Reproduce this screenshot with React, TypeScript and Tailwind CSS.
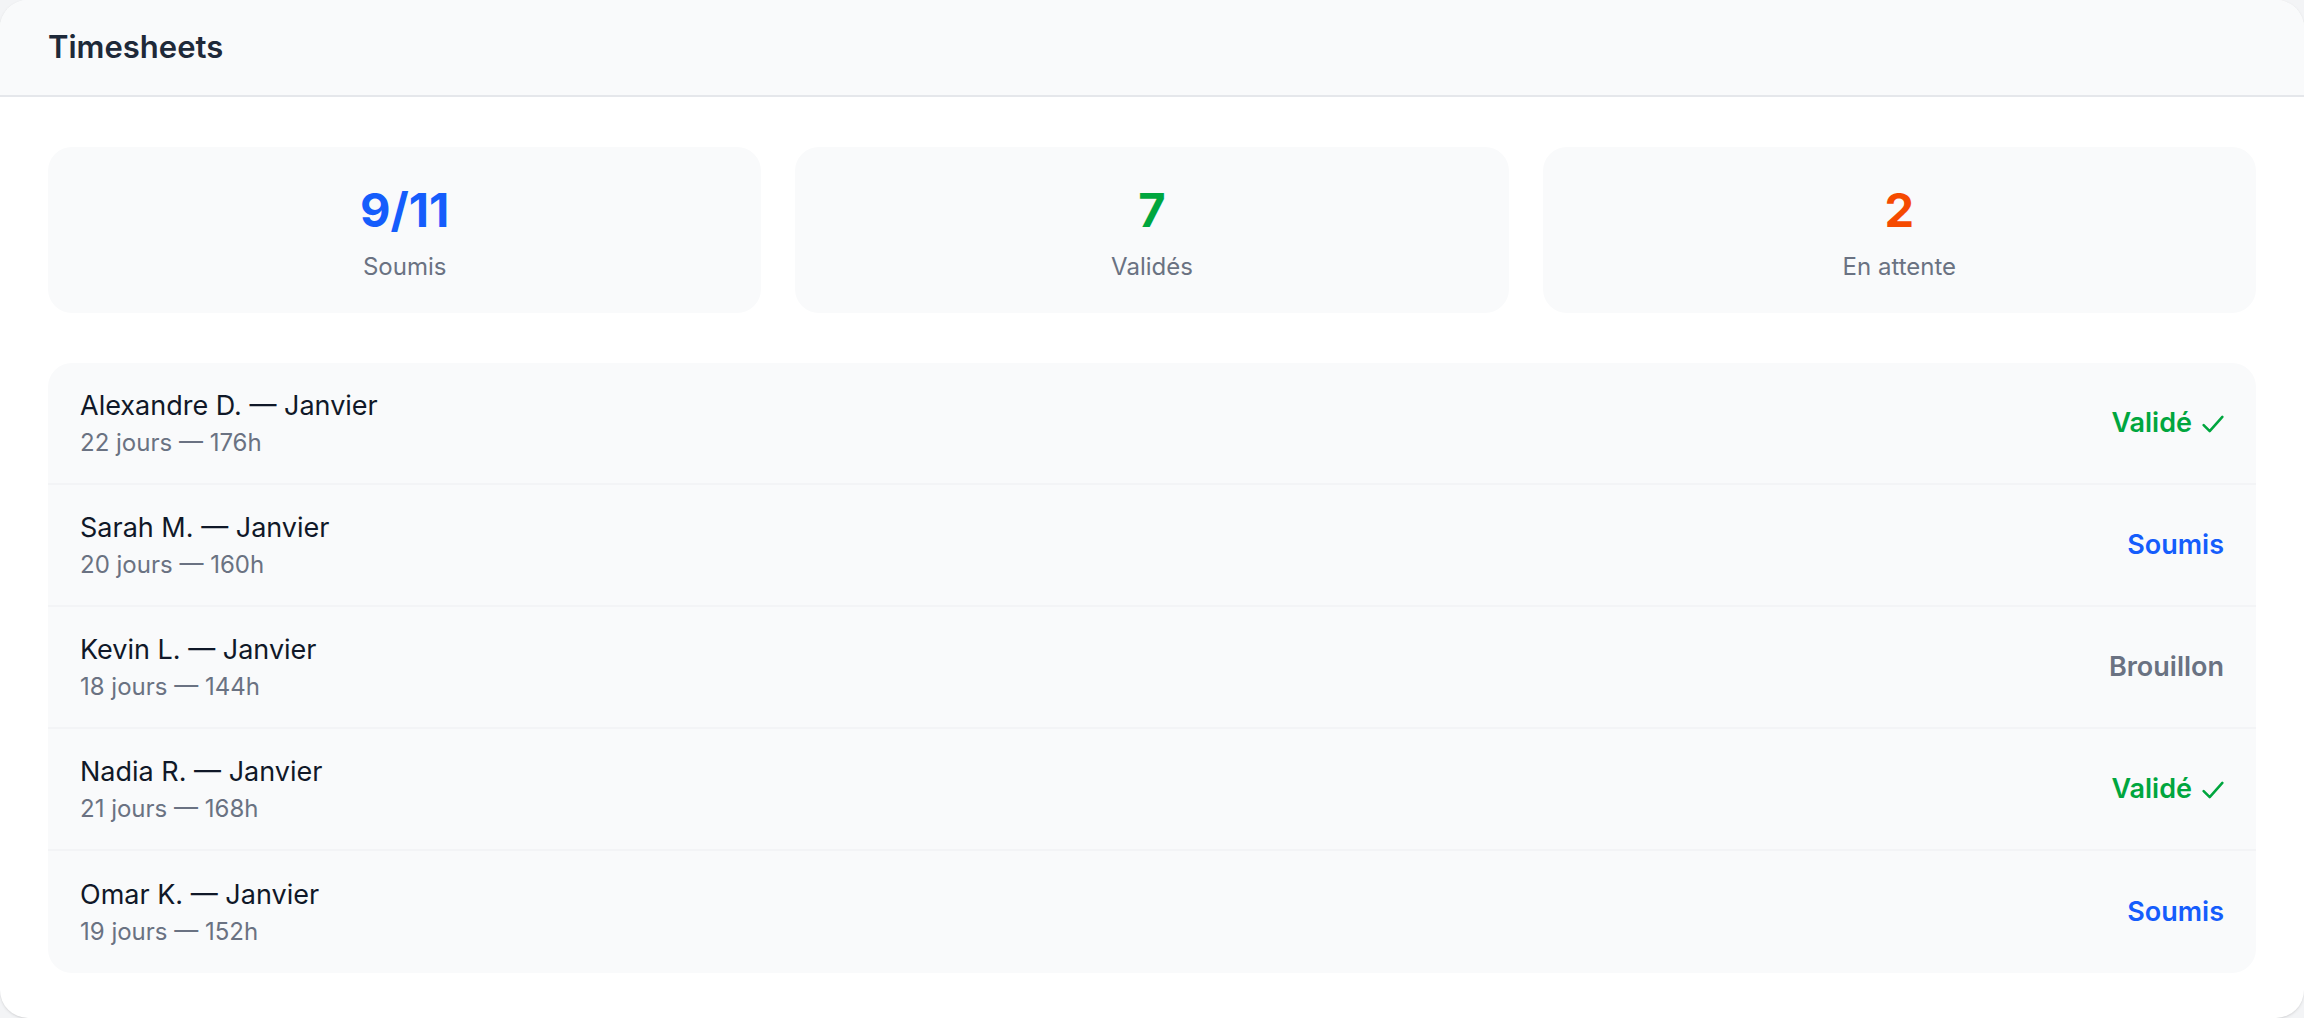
const stats = [
  { value: '9/11', label: 'Soumis', color: 'text-blue-600' },
  { value: '7', label: 'Validés', color: 'text-green-600' },
  { value: '2', label: 'En attente', color: 'text-orange-600' },
];

type Status = 'valide' | 'soumis' | 'brouillon';

const rows: { name: string; days: number; hours: number; status: Status }[] = [
  { name: 'Alexandre D.', days: 22, hours: 176, status: 'valide' },
  { name: 'Sarah M.', days: 20, hours: 160, status: 'soumis' },
  { name: 'Kevin L.', days: 18, hours: 144, status: 'brouillon' },
  { name: 'Nadia R.', days: 21, hours: 168, status: 'valide' },
  { name: 'Omar K.', days: 19, hours: 152, status: 'soumis' },
];

function StatusLabel({ status }: { status: Status }) {
  if (status === 'valide')
    return (
      <span className="flex items-center gap-[10px] text-green-600">
        Validé
        <svg viewBox="0 0 20 20" className="mt-[2px] h-[22px] w-[22px]" fill="none" stroke="currentColor" strokeWidth={2.3} strokeLinecap="round" strokeLinejoin="round">
          <path d="M1.5 11l5.5 5.5L18.5 3.5" />
        </svg>
      </span>
    );
  if (status === 'soumis') return <span className="text-blue-600">Soumis</span>;
  return <span className="text-gray-500">Brouillon</span>;
}

export default function App() {
  return (
    <div className="h-screen bg-gray-100 font-['Inter',sans-serif]">
      <div className="flex h-full flex-col overflow-hidden rounded-[28px] bg-white shadow-sm">
        <header className="flex h-[97px] shrink-0 items-center border-b-2 border-gray-200 bg-gray-50 px-12">
          <h1 className="text-[31px] font-semibold text-gray-800">Timesheets</h1>
        </header>

        <div className="px-12 pt-[50px]">
          <div className="grid grid-cols-3 gap-[34px]">
            {stats.map((s) => (
              <div key={s.label} className="flex h-[166px] flex-col items-center justify-center rounded-[24px] bg-gray-50 pt-[8px]">
                <p className={`text-[47px] font-bold leading-[54px] ${s.color}`}>{s.value}</p>
                <p className="mt-[12px] text-[24px] leading-[36px] text-gray-500">{s.label}</p>
              </div>
            ))}
          </div>

          <ul className="mt-[50px] divide-y-2 divide-gray-100 rounded-[24px] bg-gray-50">
            {rows.map((r) => (
              <li key={r.name} className="flex h-[122px] items-center justify-between px-8">
                <div>
                  <p className="text-[27px] leading-[38px] text-gray-900">{r.name} — Janvier</p>
                  <p className="mt-[2px] text-[24px] leading-[32px] text-gray-500">
                    {r.days} jours — {r.hours}h
                  </p>
                </div>
                <div className="text-[27px] font-semibold leading-[38px]">
                  <StatusLabel status={r.status} />
                </div>
              </li>
            ))}
          </ul>
        </div>
      </div>
    </div>
  );
}
